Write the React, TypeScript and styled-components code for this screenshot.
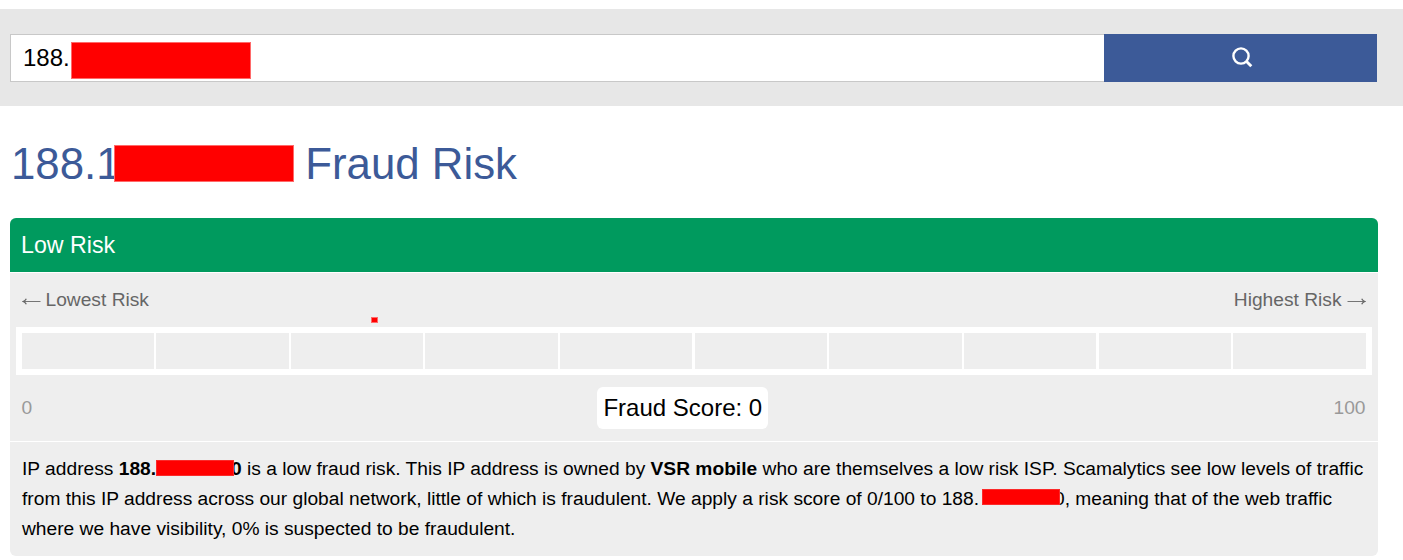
import React from "react";
import styled, { createGlobalStyle } from "styled-components";

const GlobalStyle = createGlobalStyle`
  * { box-sizing: border-box; }
  body {
    margin: 0;
    background: #fff;
    color: #000;
    font-family: Arial, "Liberation Sans", sans-serif;
    font-size: 19.2px;
    overflow: hidden;
  }
`;

const SearchBand = styled.form`
  display: flex;
  margin-top: 9px;
  height: 97px;
  padding: 25px 26px 24px 10px;
  background: #e7e7e7;
`;

const SearchField = styled.div`
  flex: 1;
  display: flex;
  align-items: flex-start;
  gap: 1px;
  padding: 7px 0 0 12px;
  border: 1px solid #c8c8c8;
  border-right: 0;
  background: #fff;
  font-size: 24px;
  line-height: 32px;
`;

const SearchButton = styled.button`
  display: flex;
  align-items: center;
  justify-content: center;
  width: 273px;
  padding: 0 0 2px 3px;
  border: 0;
  background: #3c5a98;
  color: #fff;
`;

const Redaction = styled.span<{ $w: number; $h: number }>`
  display: inline-block;
  flex: none;
  width: ${(p) => p.$w}px;
  height: ${(p) => p.$h}px;
  background: #f00;
  border: 1px solid #ff6a6a;
`;

const InlineRedaction = styled(Redaction)<{ $left?: number; $overlap: number; $rise?: number }>`
  position: relative;
  vertical-align: ${(p) => p.$rise ?? -1}px;
  border-color: #fb2a2a;
  margin: -4px ${(p) => -p.$overlap}px 0 ${(p) => p.$left ?? 0}px;
`;

const Title = styled.h1`
  display: flex;
  align-items: center;
  height: 50px;
  margin: 32px 0 30px 11px;
  color: #3c5a98;
  font-size: 43.8px;
  font-weight: 400;
  line-height: 50px;
  white-space: pre;

  ${Redaction} {
    z-index: 1;
    margin: 0 -1px 0 -6.5px;
  }
`;

const TitleText = styled.span`
  padding-top: 2px;
`;

const FieldText = styled.span`
  height: 32px;
`;

const Panel = styled.section`
  width: 1368px;
  margin-left: 10px;
  border-radius: 6px;
  overflow: hidden;
  background: #eee;
`;

const PanelHeader = styled.header`
  height: 54px;
  padding-left: 11px;
  background: #009a5e;
  color: #fff;
  font-size: 23.2px;
  line-height: 54px;
`;

const Scale = styled.div`
  height: 170px;
  border-top: 1px solid #fff;
  border-bottom: 1px solid #fff;
`;

const ScaleRow = styled.div<{ $h: number; $tone: string }>`
  display: flex;
  align-items: center;
  justify-content: space-between;
  height: ${(p) => p.$h}px;
  padding: 0 12.5px 0 11.5px;
  color: ${(p) => p.$tone};
`;

const ScaleLabel = styled.span`
  display: flex;
  align-items: center;
  gap: 5px;
`;

const ArrowSvg = styled.svg<{ $flip?: boolean }>`
  margin-top: 3px;
  transform: ${(p) => (p.$flip ? "scaleX(-1)" : "none")};
`;

const Arrow = ({ flip }: { flip?: boolean }) => (
  <ArrowSvg $flip={flip} width="19" height="9" viewBox="0 0 19 9" fill="none" stroke="currentColor" aria-hidden>
    <path d="M1.5 4.5H18.5" strokeWidth="0.9" />
    <path d="M4.3 1.7Q3.4 3.6 1.2 4.5Q3.4 5.4 4.3 7.3" strokeWidth="1.3" />
  </ArrowSvg>
);

const Meter = styled.div`
  display: grid;
  grid-template-columns: repeat(10, 1fr);
  gap: 2.3px;
  height: 48px;
  margin: 0 6px;
  padding: 6px 6.4px 6px 5.6px;
  background: #fff;
`;

const Segment = styled.span`
  background: #eee;
`;

const Score = styled.div`
  height: 42px;
  padding: 0 6px;
  border-radius: 6px;
  background: #fff;
  color: #000;
  font-size: 24px;
  line-height: 42px;
`;

const Marker = styled.i`
  position: absolute;
  top: 317px;
  left: 371px;
  width: 7px;
  height: 6px;
  border: 1px solid #ff6a6a;
  background: #f00;
`;

const Summary = styled.p`
  height: 114px;
  margin: 0;
  padding: 12px 0 0 12px;
  line-height: 30px;
  white-space: nowrap;
`;

const Line = styled.span`
  display: block;
  height: 30px;
`;

export default function App() {
  return (
    <>
      <GlobalStyle />
      <SearchBand>
        <SearchField>
          <FieldText>188.</FieldText>
          <Redaction $w={180} $h={37} />
        </SearchField>
        <SearchButton type="button" aria-label="Search">
          <svg width="22" height="22" viewBox="0 0 22 22" fill="none" stroke="currentColor" strokeWidth="2.4">
            <circle cx="10" cy="10" r="7.6" />
            <path d="M15.3 15.3L20.3 20.3" strokeWidth="2.9" />
          </svg>
        </SearchButton>
      </SearchBand>
      <Title>
        <TitleText>188.1</TitleText>
        <Redaction $w={180} $h={37} />
        <TitleText> Fraud Risk</TitleText>
      </Title>
      <Panel>
        <PanelHeader>Low Risk</PanelHeader>
        <Scale>
          <ScaleRow $h={54} $tone="#666">
            <ScaleLabel>
              <Arrow />
              Lowest Risk
            </ScaleLabel>
            <ScaleLabel>
              Highest Risk
              <Arrow flip />
            </ScaleLabel>
          </ScaleRow>
          <Meter>
            {Array.from({ length: 10 }, (_, i) => (
              <Segment key={i} />
            ))}
          </Meter>
          <ScaleRow $h={66} $tone="#999">
            <span>0</span>
            <Score>Fraud Score: 0</Score>
            <span>100</span>
          </ScaleRow>
        </Scale>
        <Summary>
          <Line>
            IP address <b>188.<InlineRedaction $w={78} $h={16} $overlap={3} />0</b> is a low fraud risk. This IP
            address is owned by <b>VSR mobile</b> who are themselves a low risk ISP. Scamalytics see low levels of
            traffic
          </Line>
          <Line>
            from this IP address across our global network, little of which is fraudulent. We apply a risk score of
            0/100 to 188.<InlineRedaction $w={78} $h={16} $left={3} $overlap={6} $rise={0} />0, meaning that of the web
            traffic
          </Line>
          <Line>where we have visibility, 0% is suspected to be fraudulent.</Line>
        </Summary>
      </Panel>
      <Marker />
    </>
  );
}
